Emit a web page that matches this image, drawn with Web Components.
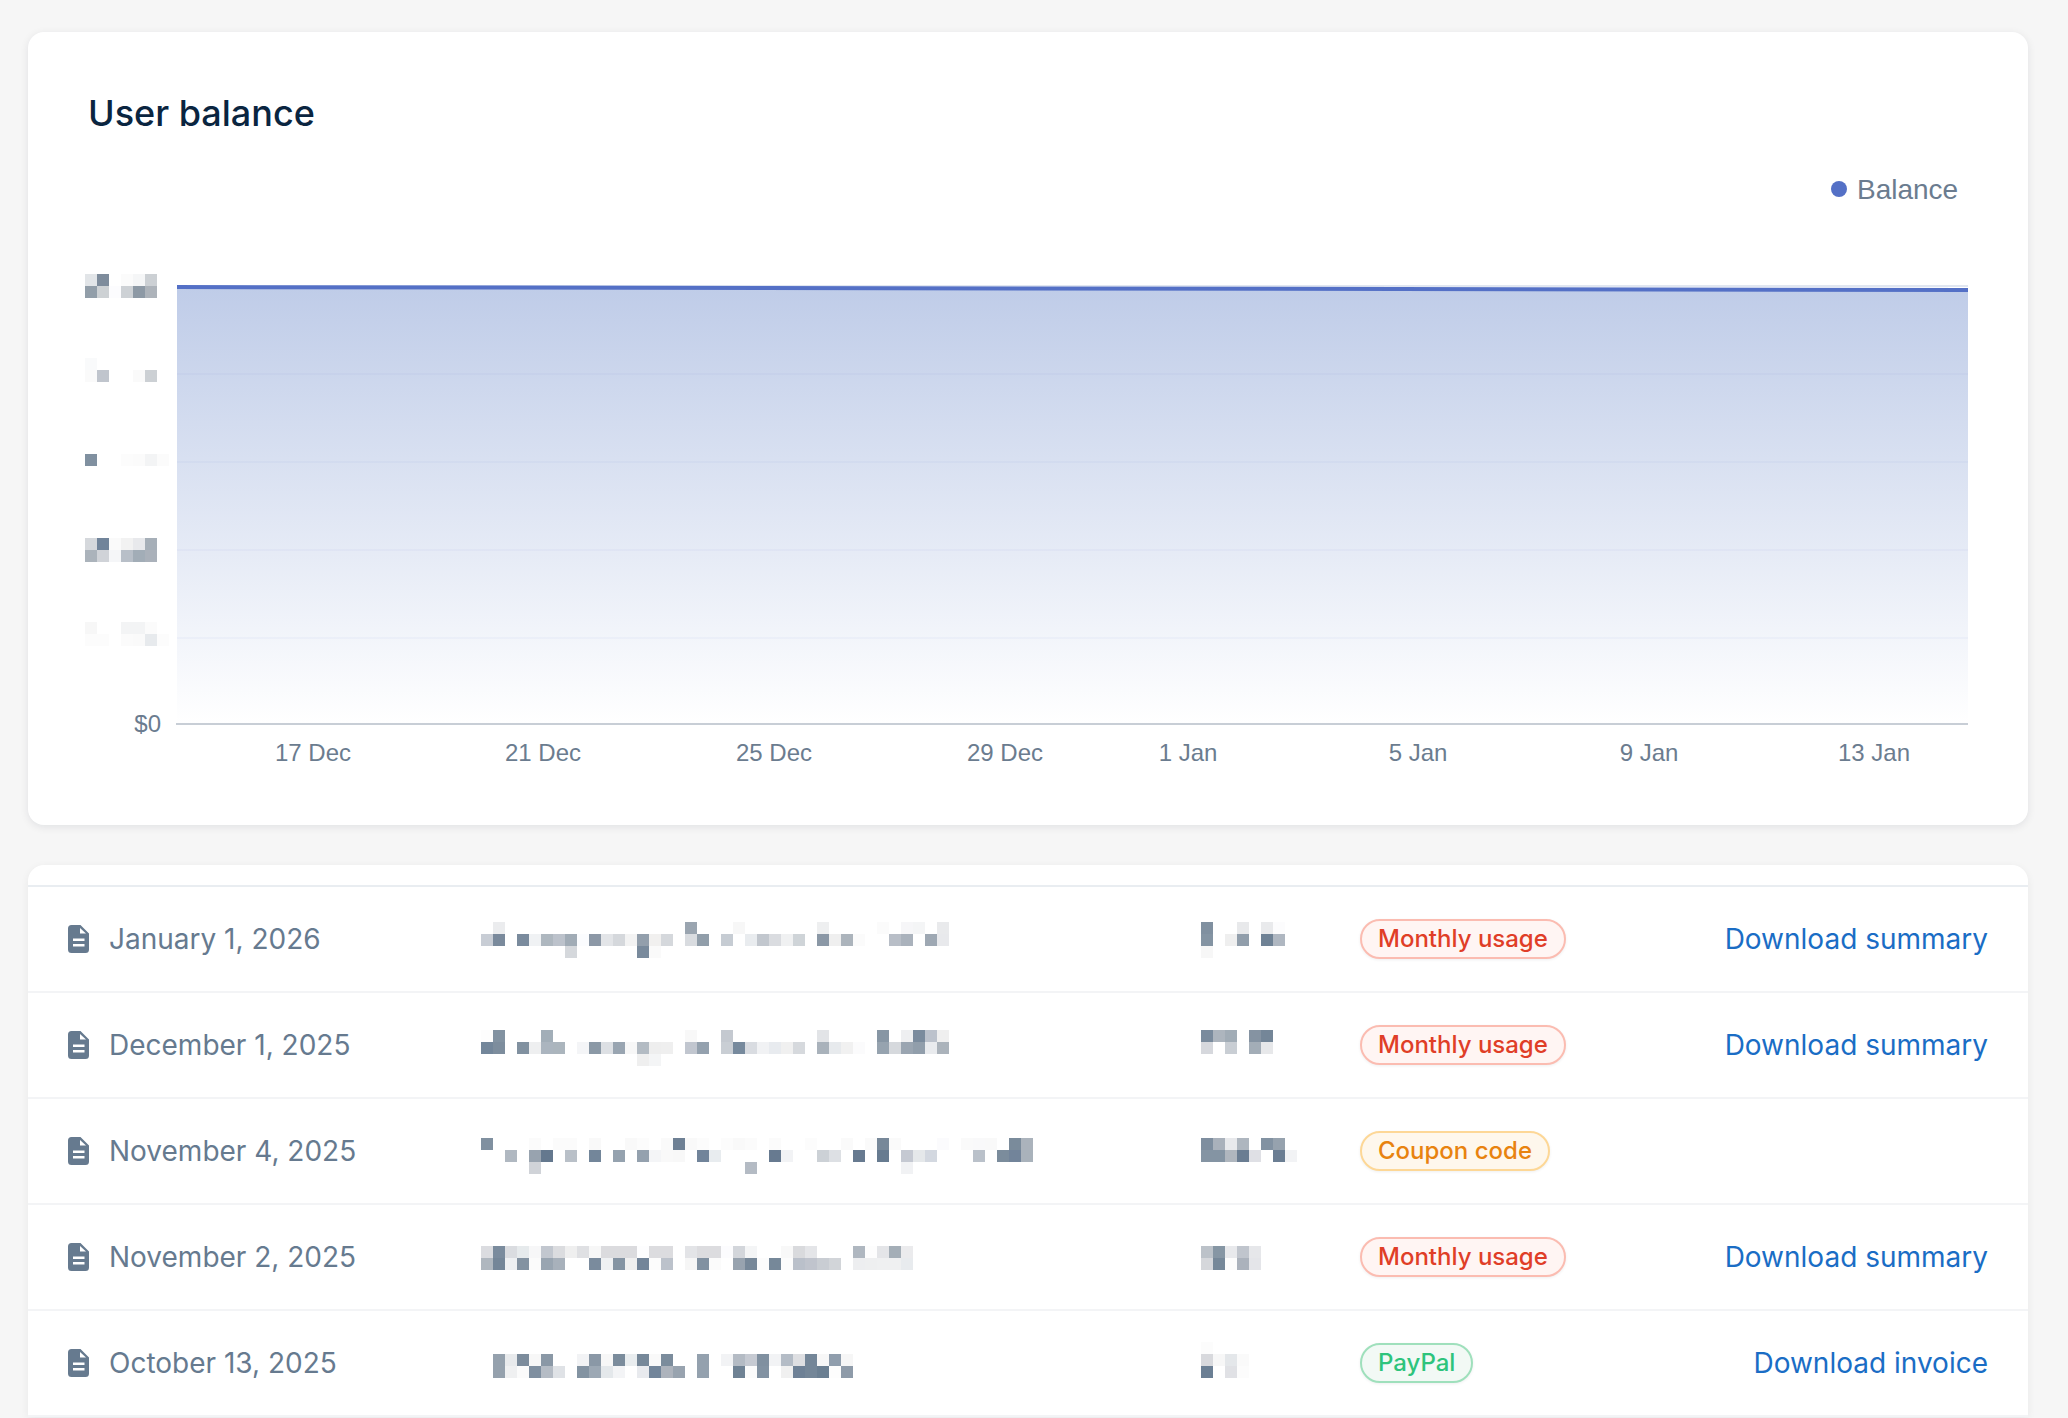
<!DOCTYPE html>
<html lang="en">
<head>
<meta charset="utf-8">
<title>User balance</title>
<style>
  html, body { margin: 0; padding: 0; background: #f6f6f6; height: 1418px; overflow: hidden; }
  body { font-family: Inter, "Liberation Sans", sans-serif; }
</style>
</head>
<body>
<billing-page>
  <balance-card></balance-card>
  <ledger-card>
    <ledger-row date="January 1, 2026" top="35" vtop="35" kind="usage" badge="Monthly usage" link="Download summary"
      desc="1:ebecee,17:9aa5b0,21:f7f7f7,28:eeeff0,33:fbfbfb,35:f6f6f8,36:f4f5f6,38:e9eaec|0:c8cdd5,1:7a8a9c,3:7a8b9d,4:f0f2f4,5:aeb7bf,6:bcc2cb,7:a1acb6,8:fbfcfe,9:8c98a6,10:e3e5e8,11:d5d8dc,12:f3f3f3,13:939fac,14:f1f0ef,15:d5d8dc,17:d9dce0,18:919eaa,20:c6ccd3,22:e9ecef,23:c2c7ce,24:dadce0,25:f0f1f2,26:cfd4d8,28:8b98a6,29:efefef,30:acb4bc,31:fbfbfb,34:b8bec7,35:aab2bc,37:9ea8b3,38:e8e9ec|7:d5d8dc,13:798a9c,14:fafafa"
      val="0:8090a0,3:e8e9eb,5:e9eaec,6:fcfcfd|0:8494a3,2:efefef,3:919eab,5:6f8295,6:afb7c1|0:f7f7f7"></ledger-row>
    <ledger-row date="December 1, 2025" top="37" vtop="37" kind="usage" badge="Monthly usage" link="Download summary"
      desc="0:fdfdfd,1:8292a1,5:a2aeb8,17:f8f8f8,20:c4c9d0,28:e2e4e7,33:8796a4,35:eeeff1,36:7a8b9d,37:bcc2cc,38:efefef|0:73869a,1:7d8d9d,3:8191a0,4:eeeff0,5:abb5bf,6:abb5bd,8:f4f5f7,9:8b99a6,10:dde0e4,11:99a5b1,12:f7f7f7,13:b3bbc3,14:eeeeee,15:efefef,17:c1c6cf,18:94a1ae,20:c9ced4,21:778a9d,22:d9dce1,23:f1f2f4,24:e8ebef,25:f0f0f0,26:d6d9dd,28:a9b2bb,29:e7eaed,30:f1f1f1,31:fbfbfc,33:96a3af,34:d6d9dd,35:9aa5b1,36:919eab,37:e9ebee,38:abb3bb|13:efefef,14:f4f5f6"
      val="0:7a8b9d,1:adb5be,2:a1acb6,4:8593a2,5:748698|0:d6d8dd,2:c9ced4,4:a3adb7,5:e7e8ea"></ledger-row>
    <ledger-row date="November 4, 2025" top="39" vtop="39" kind="coupon" badge="Coupon code"
      desc="0:8090a0,4:fbfbfb,6:fbfbfb,7:fbfbfb,9:f9f9f9,12:f9f9f9,13:fcfcfc,15:fafafa,16:6e8094,17:f9f9f9,18:fcfcfc,20:fcfcfc,21:f9f9f9,22:fbfbfb,24:fbfbfb,27:fcfcfc,30:fafafa,32:fafafa,33:778899,34:fafafa,38:fbfbfd,40:fafafa,41:f9f9fa,42:f9f9f9,44:7a8b9b,45:abb3bc|2:b0b8c1,4:98a3af,5:64788e,7:b9c0c8,9:73869a,11:95a2af,13:94a1ae,14:f4f5f7,15:f9f9f9,16:f8f8f8,18:71849a,19:e8ecef,24:677a90,25:f2f3f5,28:ccd1d6,29:dde0e4,31:677a90,33:677b90,35:c5c9d2,36:e5e8ea,37:d3d8e0,41:bac1ca,43:7b8c9c,44:72849a,45:a9b2bb|4:d0d3d8,22:b4bbc4,35:f1f2f4"
      val="0:7e8e9f,1:a9b1bb,2:e8e9ec,3:aeb6bf,5:8292a2,6:96a2ae|0:8494a3,1:8494a3,2:afb6be,3:6a7d92,4:dfe0e5,6:6b7e93,7:f2f3f5"></ledger-row>
    <ledger-row date="November 2, 2025" top="41" vtop="41" kind="usage" badge="Monthly usage" link="Download summary"
      desc="0:dbdce0,1:7a8b9d,2:dadce0,3:e6eaec,4:f7f7f8,5:c2c7cf,6:dbdcdf,7:efefef,8:dfe0e3,9:f7f7f7,10:dbdbde,11:dbdbde,12:dbdbde,13:fdfdfe,14:dcdcdf,15:dcdcdf,17:e3e4e7,18:dcdcdf,19:dcdcdf,20:fcfcfe,21:d3d6db,22:f4f5f6,25:f8f8f8,26:d9dadd,27:e4e5e8,31:afb7c0,32:fdfdfd,33:e4e5e8,34:a4aeb7,35:ebebed|0:afb7bf,1:748698,2:eef0f2,3:8392a1,4:fbfbfb,5:99a5b1,6:a8b1bb,9:7a8b9d,10:eff1f3,11:8494a3,12:efefef,13:738599,14:fcfcfc,15:bcc2cb,17:f6f6f6,18:8191a1,19:fbfbfb,21:98a3af,22:778899,23:fcfcfc,24:768899,25:fcfcfc,26:bac0ca,27:c0c4cd,28:c9cdd3,29:d2d5d9,31:edeef0,32:eeeff0,33:eff0f1,34:eff0f1,35:e8ebee"
      val="0:bcc2c9,1:8696a4,2:e8e9ec,3:c0c5cd,4:e6e7ea|0:d5d7db,1:768899,2:fcfcfc,3:abb2bc,4:e4e5e9"></ledger-row>
    <ledger-row date="October 13, 2025" top="43" vtop="31" kind="paypal" badge="PayPal" link="Download invoice"
      desc="1:95a1ad,2:e8eaec,3:7c8c9c,4:f7f7f7,5:8a98a6,8:f2f3f5,9:8a98a6,10:f7f7f7,11:7b8c9c,12:e9edef,13:768899,14:f9f9f9,15:7b8c9c,18:94a1ae,20:f2f3f5,21:b4bbc4,22:c6cad2,23:8090a0,24:f2f3f5,25:b4bcc6,26:dedfe2,27:748698,28:f7f7f7,29:909ead,30:f6f6f6|1:95a1ad,2:eff0f1,3:fbfbfb,4:7f8fa0,5:b5bcc5,6:dfe2e6,8:8393a2,9:9ca8b4,10:e4e8eb,11:f3f4f6,13:e8eaee,14:72859a,15:adb3bc,16:98a3af,18:94a1ae,21:6f8294,22:fbfbfb,23:8292a2,25:f0f0f0,26:6e8196,27:748698,28:6b7f92,29:fdfdfd,30:8e9ba9"
      val="0:fcfcfc|0:d8d9dd,1:f7f7f7,2:e4e7ea,3:fafafa|0:6b7f94,2:e0e1e5,3:fcfcfc"></ledger-row>
  </ledger-card>
</billing-page>
<script>
  /* parse "col:hex,col:hex|..." into rows of [col, hex] */
  const parseCells = s => (s || '').split('|').map(r => r ? r.split(',').map(c => c.split(':')) : []);

  class BillingPage extends HTMLElement {
    constructor() {
      super();
      this.attachShadow({ mode: 'open' }).innerHTML = `
        <style>
          :host { display: flex; flex-direction: column; gap: 40px; padding: 32px 40px 0 28px; box-sizing: border-box; height: 1418px; overflow: hidden; }
        </style><slot></slot>`;
    }
  }

  class BalanceCard extends HTMLElement {
    constructor() {
      super();
      const labels = [[313,'17 Dec'],[543,'21 Dec'],[774,'25 Dec'],[1005,'29 Dec'],[1188,'1 Jan'],[1418,'5 Jan'],[1649,'9 Jan'],[1874,'13 Jan']];
      const grid = [374,462,550,638];
      const ticks = [
        [274, '0:e2e5e8,1:7e8c9c,3:fbfbfb,4:f5f6f7,5:ccd0d4|0:929ea9,1:cdd1d4,2:fcfcfe,3:cdd1d5,4:8d99a5,5:adb3ba'],
        [358, '0:f9fafb|0:fafafa,1:c0c5cd,4:fafafa,5:ccd0d4'],
        [454, '0:8090a0,3:fcfcfc,4:fbfbfb,5:f3f4f5,6:fbfbfb'],
        [538, '0:d5d8dc,1:71849a,2:fafafa,3:f2f2f2,4:e8e9ec,5:a6afb8|0:abb3bb,1:d0d3d8,2:f5f6f8,3:b8bfc8,4:a2adb7,5:aab1ba'],
        [622, '0:f7f7f7,3:f3f4f5,4:f3f4f5,5:fbfbfb|0:fcfcfc,1:fcfcfc,3:fbfbfb,4:fafafa,5:e7eaed,6:fcfcfc']
      ];
      let rects = '';
      for (const [y, s] of ticks) parseCells(s).forEach((row, ri) => row.forEach(([c, h]) => {
        rects += `<rect x="${85 + c * 12}" y="${y + ri * 12}" width="12" height="12" fill="#${h}"/>`;
      }));
      this.attachShadow({ mode: 'open' }).innerHTML = `
        <style>
          :host { display: block; height: 793px; background: #fff; border-radius: 16px; box-shadow: 0 2px 8px rgba(16,24,40,.09); overflow: hidden; flex: none; }
          h2 { margin: 0; padding: 59px 60px 1px; font: 500 36px/44px Inter, sans-serif; color: #0a2540; }
          svg { display: block; }
          text { font-family: "Liberation Sans", Arial, sans-serif; fill: #6b7c8f; }
        </style>
        <h2>User balance</h2>
        <svg width="2000" height="689" viewBox="28 136 2000 689" aria-label="Balance chart">
          <defs>
            <linearGradient id="a" gradientUnits="userSpaceOnUse" x1="0" y1="287" x2="0" y2="724">
              <stop offset="0" stop-color="#bfcce8"/>
              <stop offset="1" stop-color="#bfcce8" stop-opacity="0"/>
            </linearGradient>
          </defs>
          <circle cx="1839" cy="189" r="8" fill="#5470c6"/>
          <text x="1857" y="199" font-size="28">Balance</text>
          <rect x="177" y="285" width="1791" height="2" fill="#e0e6f1"/>
          <polygon points="177,287 1968,290 1968,724 177,724" fill="url(#a)"/>
          ${grid.map(y => `<rect x="177" y="${y - 1}" width="1791" height="2" fill="#5470c6" fill-opacity=".04"/>`).join('')}
          <rect x="176" y="723" width="1792" height="2" fill="#c8ced6"/>
          <polyline points="177,287 1968,290" fill="none" stroke="#5470c6" stroke-width="4"/>
          ${rects}
          <text x="161" y="732" font-size="24" text-anchor="end">$0</text>
          ${labels.map(([x, t]) => `<text x="${x}" y="761" font-size="24" text-anchor="middle">${t}</text>`).join('')}
        </svg>`;
    }
  }

  class LedgerCard extends HTMLElement {
    constructor() {
      super();
      this.attachShadow({ mode: 'open' }).innerHTML = `
        <style>
          :host { display: block; background: #fff; border-radius: 16px 16px 0 0; padding-top: 20px; box-shadow: 0 2px 8px rgba(16,24,40,.06); flex: none; }
          .head { height: 2px; background: #e9edf1; }
        </style>
        <div class="head"></div><slot></slot>`;
    }
  }

  class BlurMosaic extends HTMLElement {
    constructor() {
      super();
      this.attachShadow({ mode: 'open' });
    }
    connectedCallback() {
      const rows = parseCells(this.getAttribute('cells'));
      const cols = Math.max(1, ...rows.flat().map(c => +c[0] + 1));
      let html = '';
      rows.forEach((row, ri) => row.forEach(([c, h]) => {
        html += `<i style="grid-row:${ri + 1};grid-column:${+c + 1};background:#${h}"></i>`;
      }));
      this.shadowRoot.innerHTML = `
        <style>
          :host { display: grid; grid-template-columns: repeat(${cols}, 12px); grid-auto-rows: 12px; width: max-content; }
          i { display: block; width: 12px; height: 12px; }
        </style>${html}`;
    }
  }

  class StatusBadge extends HTMLElement {
    constructor() {
      super();
      this.attachShadow({ mode: 'open' }).innerHTML = `
        <style>
          :host { display: inline-flex; align-items: center; height: 40px; box-sizing: border-box; padding: 0 16px; border: 2px solid; border-radius: 20px; font: 500 24px/1 Inter, sans-serif; white-space: nowrap; box-shadow: 0 1px 3px rgba(16,24,40,.07); }
          :host([kind=usage]) { color: #e03e27; background: #fff5f3; border-color: #fbbcb1; }
          :host([kind=coupon]) { color: #e8830f; background: #fef7ec; border-color: #fdd796; }
          :host([kind=paypal]) { color: #2ec47c; background: #f2f9f5; border-color: #9fe0bc; }
        </style><slot></slot>`;
    }
  }

  class DocIcon extends HTMLElement {
    constructor() {
      super();
      this.attachShadow({ mode: 'open' }).innerHTML = `
        <style>:host { display: block; width: 21px; height: 28px; flex: none; } svg { display: block; }</style>
        <svg width="21" height="28" viewBox="0 0 21 28" aria-hidden="true">
          <path fill="#667a8f" fill-rule="evenodd" d="M3.5 0H12.5L21 8.5V24.5A3.5 3.5 0 0 1 17.5 28H3.5A3.5 3.5 0 0 1 0 24.5V3.5A3.5 3.5 0 0 1 3.5 0ZM12 3V8.5H18ZM5 13.5V16H16.5V13.5ZM5 19V21.5H16.5V19Z"/>
        </svg>`;
    }
  }

  class LedgerRow extends HTMLElement {
    constructor() {
      super();
      this.attachShadow({ mode: 'open' });
    }
    connectedCallback() {
      const a = n => this.getAttribute(n) || '';
      const top = +a('top'), vtop = +a('vtop');
      this.shadowRoot.innerHTML = `
        <style>
          :host { display: grid; grid-template-columns: 413px 720px 159px 1fr auto; height: 106px; box-sizing: border-box; padding: 0 40px; border-bottom: 2px solid #f3f4f6; font: 400 28px/36px Inter, sans-serif; color: #667a8f; }
          .date { display: flex; align-items: center; gap: 20px; white-space: nowrap; }
          .mid { align-self: start; }
          .badge { align-self: center; }
          a { align-self: center; color: #1a6dc5; text-decoration: none; white-space: nowrap; }
        </style>
        <div class="date"><doc-icon></doc-icon><span>${a('date')}</span></div>
        <blur-mosaic class="mid" style="margin-top:${top}px" cells="${a('desc')}"></blur-mosaic>
        <blur-mosaic class="mid" style="margin-top:${vtop}px" cells="${a('val')}"></blur-mosaic>
        <div class="badge"><status-badge kind="${a('kind')}">${a('badge')}</status-badge></div>
        ${a('link') ? `<a href="#">${a('link')}</a>` : '<span></span>'}`;
    }
  }

  customElements.define('billing-page', BillingPage);
  customElements.define('balance-card', BalanceCard);
  customElements.define('ledger-card', LedgerCard);
  customElements.define('blur-mosaic', BlurMosaic);
  customElements.define('status-badge', StatusBadge);
  customElements.define('doc-icon', DocIcon);
  customElements.define('ledger-row', LedgerRow);
</script>
</body>
</html>
